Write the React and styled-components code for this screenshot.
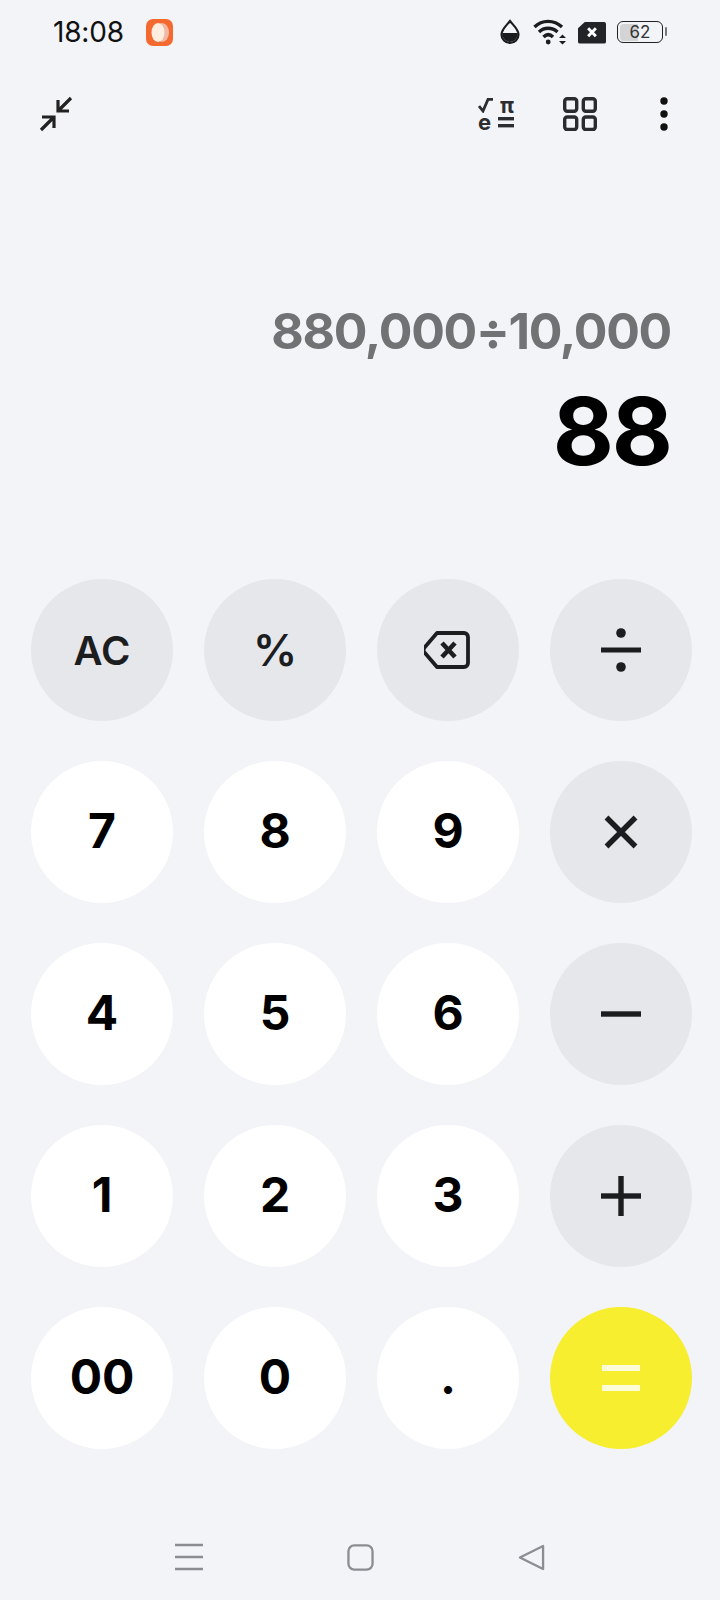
import React from 'react';
import styled, { createGlobalStyle } from 'styled-components';

const GlobalStyle = createGlobalStyle`
	html, body {
		margin: 0;
		padding: 0;
		background: #f2f4f8;
	}
	* {
		box-sizing: border-box;
	}
`;

const Screen = styled.div`
	width: 720px;
	height: 1600px;
	display: flex;
	flex-direction: column;
	background: #f2f4f8;
	font-family: Inter, "Noto Sans", sans-serif;
	overflow: hidden;
`;

const StatusBar = styled.div`
	height: 64px;
	padding: 0 53px 0 53px;
	display: flex;
	align-items: center;
	justify-content: space-between;
`;

const StatusLeft = styled.div`
	display: flex;
	align-items: center;
	gap: 22px;
`;

const StatusRight = styled.div`
	display: flex;
	align-items: center;
	gap: 11px;
`;

const Clock = styled.span`
	font-size: 28px;
	color: #111;
	letter-spacing: -0.2px;
`;

const AppBadge = styled.div`
	width: 27px;
	height: 27px;
	border-radius: 7px;
	background: #f4692f;
	display: flex;
	align-items: center;
	justify-content: center;
`;

const Battery = styled.div`
	position: relative;
	width: 46px;
	height: 22px;
	border: 1.6px solid #222;
	border-radius: 6px;
	font-size: 17px;
	color: #333;
	display: flex;
	align-items: center;
	justify-content: center;
	background: linear-gradient(90deg, #d4d4d6 0 44%, transparent 44%);
	background-clip: content-box;
	padding: 1.5px;
	margin-right: 4px;

	&::after {
		content: '';
		position: absolute;
		right: -5px;
		top: 5px;
		width: 2px;
		height: 9px;
		background: #777;
		border-radius: 1px;
	}
`;

const Toolbar = styled.div`
	height: 98px;
	padding: 1px 51px 0 38px;
	display: flex;
	align-items: center;
	justify-content: space-between;
`;

const ToolGroup = styled.div`
	display: flex;
	align-items: center;
	gap: 49px;
`;

const DotsSlot = styled.div`
	display: flex;
	margin-left: 13px;
`;

const ScienceGrid = styled.div`
	width: 36px;
	display: grid;
	grid-template-columns: 20px 16px;
	grid-auto-rows: 17px;
	font-size: 22px;
	line-height: 17px;
	font-weight: 700;
	color: #2c2d30;
`;

const ScienceMark = styled.span`
	display: flex;
	align-items: center;
	justify-content: ${(p) => p.$align || 'flex-start'};
`;

const Display = styled.div`
	height: 417px;
	padding: 139px 49px 0 0;
	display: flex;
	flex-direction: column;
	align-items: flex-end;
`;

const Expression = styled.div`
	font-size: 50px;
	line-height: 60px;
	font-weight: 650;
	letter-spacing: -1.3px;
	color: #707274;
`;

const Result = styled.div`
	margin-top: 18px;
	font-size: 94px;
	line-height: 104px;
	font-weight: 700;
	letter-spacing: -2px;
	color: #000;
`;

const Keypad = styled.div`
	padding: 0 28px 0 31px;
	display: grid;
	grid-template-columns: repeat(4, 142px);
	grid-auto-rows: 142px;
	column-gap: 31px;
	row-gap: 40px;
`;

const Key = styled.div`
	width: 142px;
	height: 142px;
	border-radius: 50%;
	display: flex;
	align-items: center;
	justify-content: center;
	font-size: ${(p) => p.$size || 48}px;
	font-weight: ${(p) => p.$weight || 650};
	padding-bottom: ${(p) => (p.$variant ? 0 : 3)}px;
	color: ${(p) => (p.$variant === 'op' ? '#1c1d1f' : '#000')};
	background: ${(p) =>
		p.$variant === 'op' ? '#e6e7eb' : p.$variant === 'equals' ? '#f7ee2f' : '#fff'};
`;

const NavBar = styled.div`
	margin-top: 94px;
	padding: 0 175px;
	display: flex;
	align-items: center;
	justify-content: space-between;
`;

const CompressIcon = () => (
	<svg width="36" height="36" viewBox="0 0 36 36" fill="none" stroke="#222" strokeWidth="3.2">
		<path d="M33 2 L21 14 M20 4 V15 H31" />
		<path d="M3 34 L15 22 M4 21 H16 V32" />
	</svg>
);

const RootMark = () => (
	<svg width="15" height="15" viewBox="0 0 15 15" fill="none" stroke="#2c2d30" strokeWidth="2.8">
		<path d="M1 8 L5 13 L10 1.4 H15" />
	</svg>
);

const EqualsMark = () => (
	<svg width="16" height="11" viewBox="0 0 16 11" fill="#2c2d30">
		<rect width="16" height="3.4" />
		<rect y="7" width="16" height="3.4" />
	</svg>
);

const ScienceIcon = () => (
	<ScienceGrid>
		<ScienceMark><RootMark /></ScienceMark>
		<ScienceMark $align="flex-end">π</ScienceMark>
		<ScienceMark>e</ScienceMark>
		<ScienceMark $align="flex-end"><EqualsMark /></ScienceMark>
	</ScienceGrid>
);

const GridIcon = () => (
	<svg width="34" height="34" viewBox="0 0 34 34" fill="none" stroke="#2a2b2e" strokeWidth="3.4">
		<rect x="1.7" y="1.7" width="12" height="12.5" rx="2.5" />
		<rect x="20.3" y="1.7" width="12" height="12.5" rx="2.5" />
		<rect x="1.7" y="20" width="12" height="12.5" rx="2.5" />
		<rect x="20.3" y="20" width="12" height="12.5" rx="2.5" />
	</svg>
);

const DotsIcon = () => (
	<svg width="10" height="34" viewBox="0 0 10 34" fill="#111">
		<circle cx="5" cy="4" r="3.7" />
		<circle cx="5" cy="17" r="3.7" />
		<circle cx="5" cy="30" r="3.7" />
	</svg>
);

const DropIcon = () => (
	<svg width="22" height="26" viewBox="0 0 22 26" fill="none">
		<path d="M10 2 C6 7 1.5 10.5 1.5 15.5 A8.5 8.5 0 0 0 18.5 15.5 C18.5 10.5 14 7 10 2 Z" stroke="#1b1c1e" strokeWidth="2.2" />
		<path d="M2 14 H18 A8 9 0 0 1 2 14 Z" fill="#1b1c1e" />
	</svg>
);

const WifiIcon = () => (
	<svg width="34" height="26" viewBox="0 0 34 26" fill="none" stroke="#1b1c1e" strokeWidth="3.4">
		<path d="M1.5 8 C9 0.5 21 0.5 29 8" />
		<path d="M6 13 C11 8 19 8 24.5 13" />
		<path d="M10.5 18 C13.5 15 17 15 20 18" />
		<circle cx="15.2" cy="23" r="2.4" fill="#1b1c1e" stroke="none" />
		<path d="M26 19 L29.5 15.5 L33 19 Z M26 22 H33 L29.5 25.5 Z" fill="#1b1c1e" stroke="none" />
	</svg>
);

const SimIcon = () => (
	<svg width="28" height="23" viewBox="0 0 29 23">
		<path d="M7 0.5 H27 A2 2 0 0 1 29 2.5 V21 A2 2 0 0 1 27 23 H2 A2 2 0 0 1 0 21 V7 Z" fill="#232427" />
		<path d="M10.5 7 L18.5 15.5 M18.5 7 L10.5 15.5" stroke="#fff" strokeWidth="3" />
	</svg>
);

const BadgeIcon = () => (
	<svg width="19" height="21" viewBox="0 0 19 21">
		<ellipse cx="12" cy="10.5" rx="7" ry="9.5" fill="#f3b7a6" />
		<ellipse cx="8" cy="10.5" rx="6.5" ry="9.5" fill="#fdeee0" />
	</svg>
);

const BackspaceIcon = () => (
	<svg width="48" height="38" viewBox="2 0 48 38" fill="none" stroke="#1c1d1f">
		<path d="M15 2 H42 A4 4 0 0 1 46 6 V32 A4 4 0 0 1 42 36 H15 L2.5 21.5 A4 4 0 0 1 2.5 16.5 Z" strokeWidth="3.8" strokeLinejoin="round" />
		<path d="M20 12 L33 26 M33 12 L20 26" strokeWidth="4.6" />
	</svg>
);

const DivideIcon = () => (
	<svg width="40" height="44" viewBox="0 0 40 44" fill="#1c1d1f">
		<rect y="19.5" width="40" height="5" />
		<circle cx="20" cy="5" r="4.8" />
		<circle cx="20" cy="39" r="4.8" />
	</svg>
);

const TimesIcon = () => (
	<svg width="34" height="34" viewBox="0 0 34 34" stroke="#1c1d1f" strokeWidth="5.4">
		<path d="M2.5 2.5 L31.5 31.5 M31.5 2.5 L2.5 31.5" />
	</svg>
);

const MinusIcon = () => (
	<svg width="40" height="6" viewBox="0 0 40 6" fill="#1c1d1f">
		<rect width="40" height="5.4" y="0.3" />
	</svg>
);

const PlusIcon = () => (
	<svg width="40" height="40" viewBox="0 0 40 40" fill="#1c1d1f">
		<rect y="17.3" width="40" height="5.4" />
		<rect x="17.3" width="5.4" height="40" />
	</svg>
);

const EqualsIcon = () => (
	<svg width="38" height="26" viewBox="0 0 38 26" fill="#fdfbd8">
		<rect width="38" height="6" />
		<rect y="20" width="38" height="6" />
	</svg>
);

const MenuNavIcon = () => (
	<svg width="28" height="28" viewBox="0 0 28 28" stroke="#8b8d92" strokeWidth="2.4">
		<path d="M0 2 H28 M0 14 H28 M0 26 H28" />
	</svg>
);

const HomeNavIcon = () => (
	<svg width="27" height="27" viewBox="0 0 28 28" fill="none" stroke="#8b8d92" strokeWidth="2.4">
		<rect x="1.5" y="1.5" width="25" height="25" rx="6" />
	</svg>
);

const BackNavIcon = () => (
	<svg width="27" height="27" viewBox="0 0 28 28" fill="none" stroke="#8b8d92" strokeWidth="2.4" strokeLinejoin="round">
		<path d="M26 2 V26 L2 14 Z" />
	</svg>
);

const keys = [
	{ label: 'AC', variant: 'op', size: 40, weight: 600 },
	{ label: '%', variant: 'op', size: 44, weight: 600 },
	{ icon: <BackspaceIcon />, variant: 'op' },
	{ icon: <DivideIcon />, variant: 'op' },
	{ label: '7' },
	{ label: '8' },
	{ label: '9' },
	{ icon: <TimesIcon />, variant: 'op' },
	{ label: '4' },
	{ label: '5' },
	{ label: '6' },
	{ icon: <MinusIcon />, variant: 'op' },
	{ label: '1' },
	{ label: '2' },
	{ label: '3' },
	{ icon: <PlusIcon />, variant: 'op' },
	{ label: '00' },
	{ label: '0' },
	{ label: '.' },
	{ icon: <EqualsIcon />, variant: 'equals' },
];

export default function App() {
	return (
		<Screen>
			<GlobalStyle />
			<StatusBar>
				<StatusLeft>
					<Clock>18:08</Clock>
					<AppBadge><BadgeIcon /></AppBadge>
				</StatusLeft>
				<StatusRight>
					<DropIcon />
					<WifiIcon />
					<SimIcon />
					<Battery>62</Battery>
				</StatusRight>
			</StatusBar>
			<Toolbar>
				<CompressIcon />
				<ToolGroup>
					<ScienceIcon />
					<GridIcon />
					<DotsSlot><DotsIcon /></DotsSlot>
				</ToolGroup>
			</Toolbar>
			<Display>
				<Expression>880,000÷10,000</Expression>
				<Result>88</Result>
			</Display>
			<Keypad>
				{keys.map((key, i) => (
					<Key key={i} $variant={key.variant} $size={key.size} $weight={key.weight}>
						{key.icon || key.label}
					</Key>
				))}
			</Keypad>
			<NavBar>
				<MenuNavIcon />
				<HomeNavIcon />
				<BackNavIcon />
			</NavBar>
		</Screen>
	);
}
